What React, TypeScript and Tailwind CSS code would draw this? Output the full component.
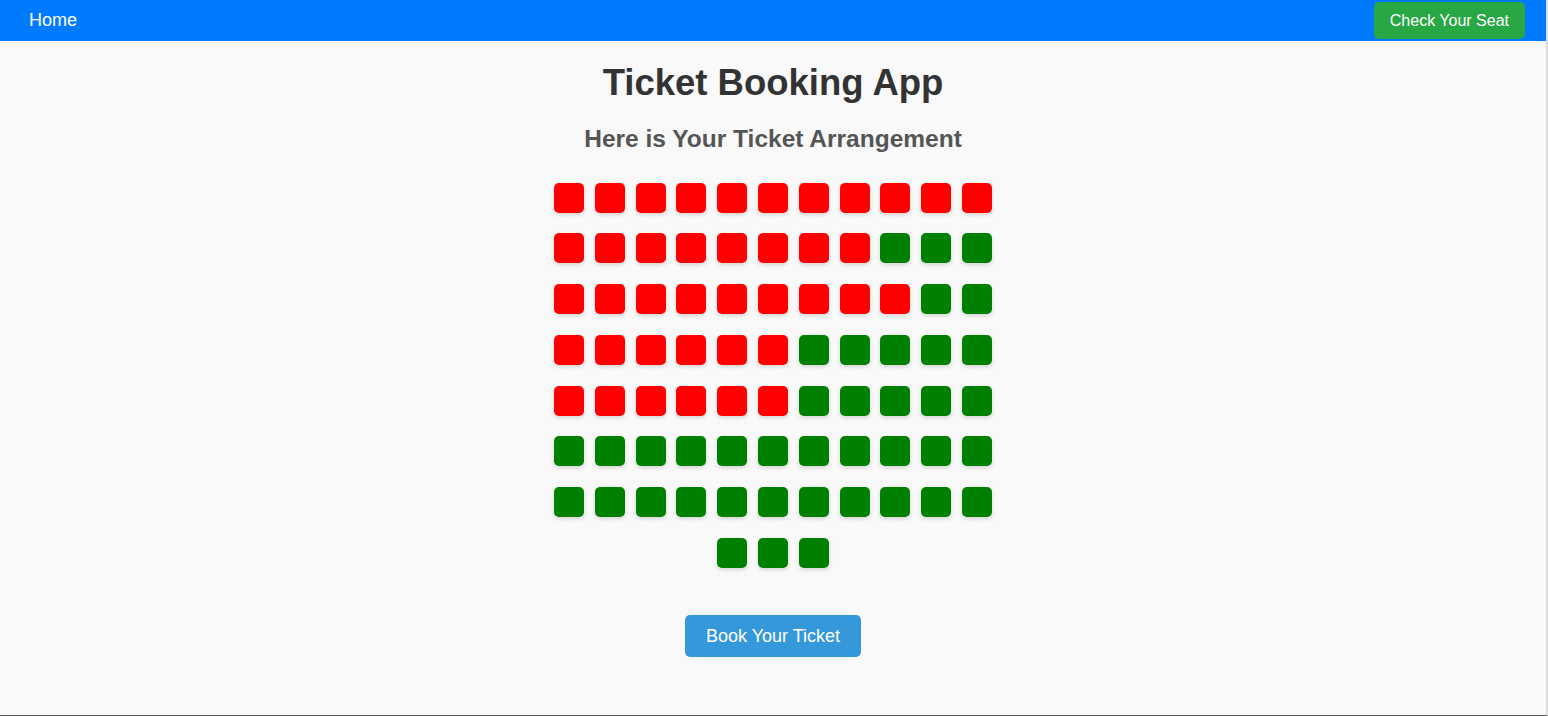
import React from "react";

const rows: string[] = [
  "RRRRRRRRRRR",
  "RRRRRRRRGGG",
  "RRRRRRRRRGG",
  "RRRRRRGGGGG",
  "RRRRRRGGGGG",
  "GGGGGGGGGGG",
  "GGGGGGGGGGG",
  "GGG",
];

const seats = rows.join("").split("");

export default function App() {
  return (
    <div className="h-[716px] w-[1548px] overflow-hidden bg-[#f9f9f9] font-['Liberation_Sans',Arial,sans-serif] border-r-2 border-b border-r-[#dcdcdc] border-b-[#555]">
      <nav className="flex h-[41px] items-center justify-between bg-[#007bff] pl-[29px] pr-[21px]">
        <span className="text-[18px] text-white">Home</span>
        <button className="h-[37px] rounded-[5px] bg-[#28a745] px-[16px] text-[16px] text-white">
          Check Your Seat
        </button>
      </nav>
      <main className="flex flex-col items-center">
        <h1 className="mt-[15px] text-[36.5px] font-bold text-[#333]">Ticket Booking App</h1>
        <h2 className="mt-[10px] text-[24.5px] font-bold text-[#555]">Here is Your Ticket Arrangement</h2>
        <div className="mt-[25px] flex w-[438px] flex-wrap justify-center gap-x-[10.8px] gap-y-[20.8px]">
          {seats.map((s, i) => (
            <div
              key={i}
              className={
                "h-[30px] w-[30px] rounded-[5px] shadow-[0_2px_4px_rgba(0,0,0,0.15)] " +
                (s === "R" ? "bg-[#ff0000]" : "bg-[#008000]")
              }
            />
          ))}
        </div>
        <button className="mt-[47px] h-[42px] w-[176px] rounded-[5px] bg-[#3498db] text-[18px] text-white">
          Book Your Ticket
        </button>
      </main>
    </div>
  );
}
